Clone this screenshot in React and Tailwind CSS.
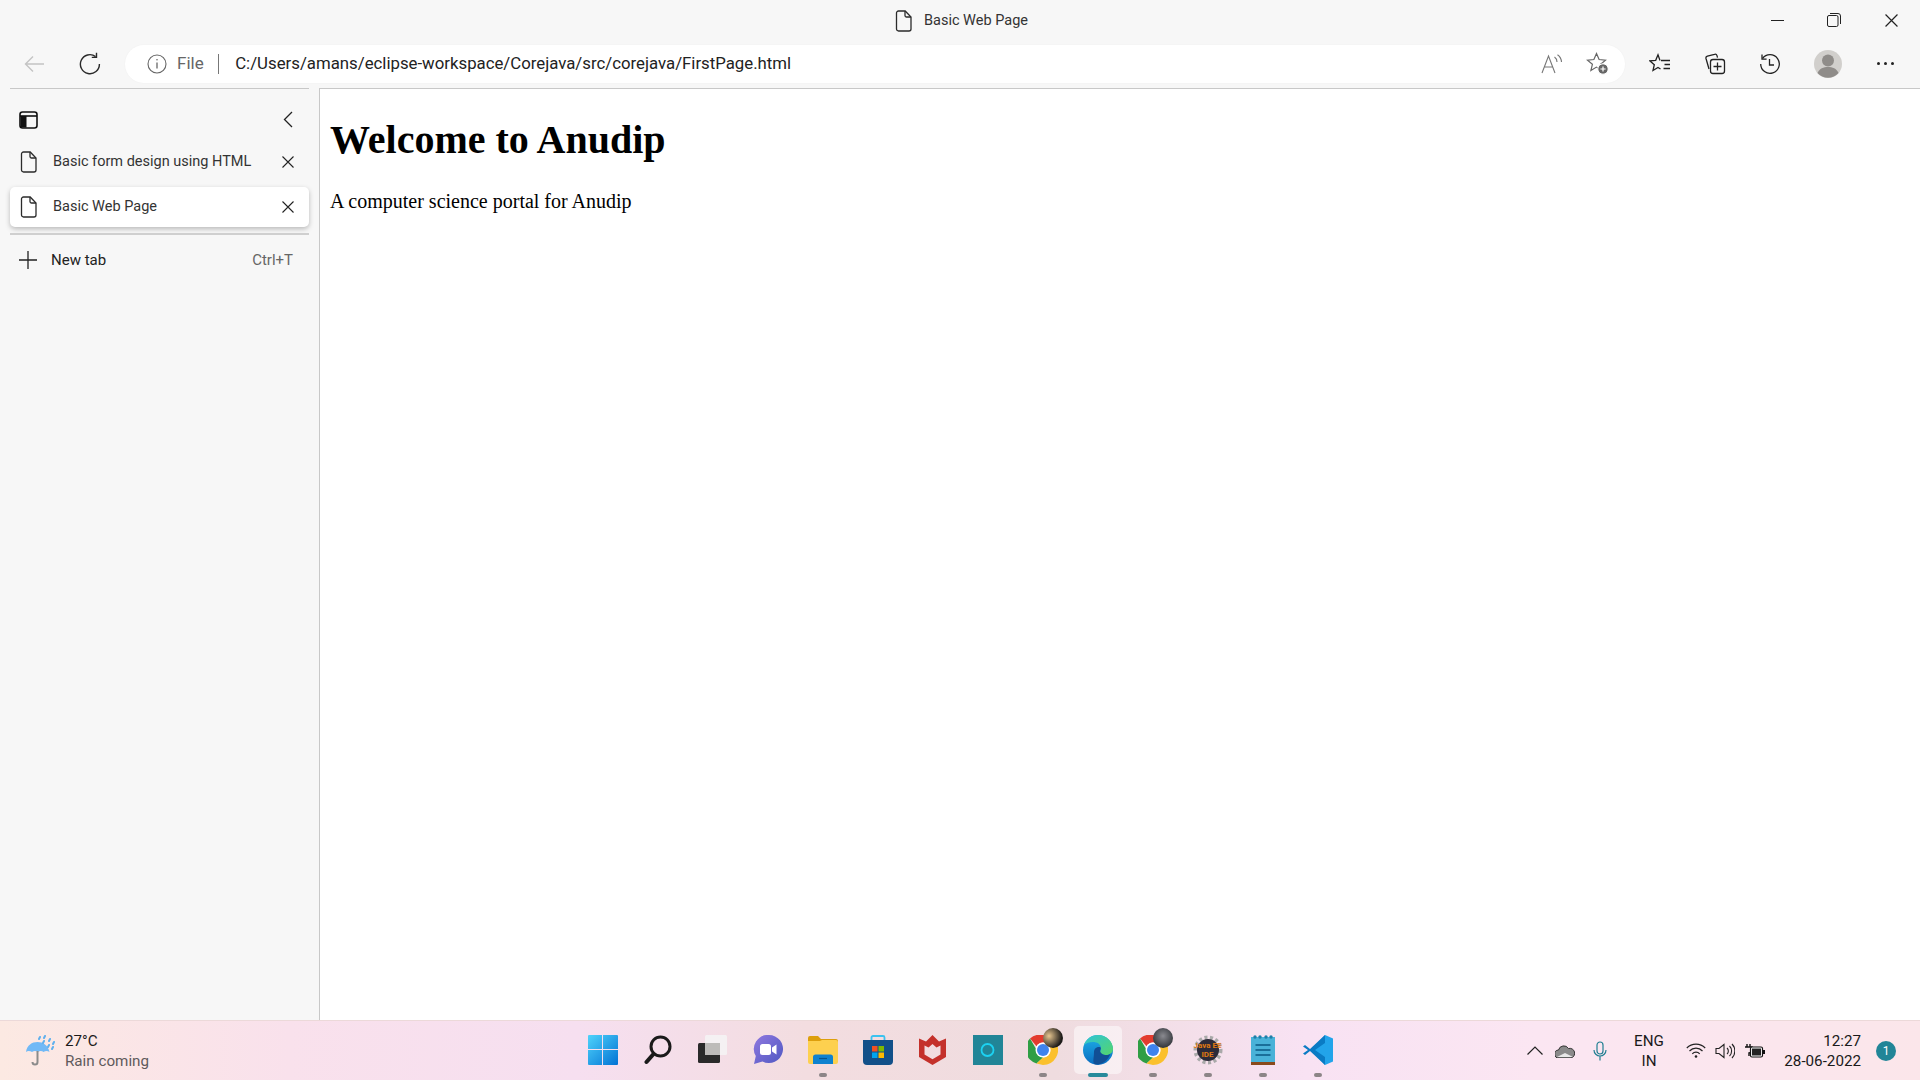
import React from 'react';

const ui = "font-['Roboto','Open_Sans',sans-serif]";

const Doc = ({ className = 'w-[18px] h-[22px]' }) => (
  <svg viewBox="0 0 18 22" className={className} fill="none" stroke="#2b2b2b" strokeWidth="1.3">
    <path d="M3.5 1h6.7L16 7v12a2 2 0 0 1-2 2H3.5a2 2 0 0 1-2-2V3a2 2 0 0 1 2-2z" />
    <path d="M10 1v4.5A1.5 1.5 0 0 0 11.5 7H16" />
  </svg>
);

const Close = ({ size = 12 }) => (
  <svg width={size} height={size} viewBox="0 0 12 12" stroke="#222" strokeWidth="1.1" fill="none">
    <path d="M.5.5l11 11M11.5.5l-11 11" />
  </svg>
);

const TitleBar = () => (
  <div className="h-[42px] grid grid-cols-[1fr_auto_1fr] items-center">
    <div />
    <div className="flex items-center gap-[11px] pl-[3px]">
      <Doc />
      <span className="text-[14.5px] text-[#333]">Basic Web Page</span>
    </div>
    <div className="flex justify-end items-center -mt-[2px]">
      <div className="w-[57px] pl-[2px] flex justify-center">
        <div className="w-[13px] h-px bg-[#222]" />
      </div>
      <div className="w-[58px] flex justify-center">
        <svg width="14" height="14" viewBox="0 0 14 14" fill="none" stroke="#222">
          <rect x="0.5" y="2.5" width="10.5" height="11" rx="1.5" />
          <path d="M3 .5h8a2.5 2.5 0 0 1 2.5 2.5v8" />
        </svg>
      </div>
      <div className="w-[57px] flex justify-center">
        <Close size={13} />
      </div>
    </div>
  </div>
);

const Cell = ({ children, className = '' }) => (
  <div className={`w-[55px] h-full flex items-center justify-center ${className}`}>{children}</div>
);

const Toolbar = () => (
  <div className="h-[46px] flex items-center pb-[3px]">
    <div className="w-[125px] h-full flex items-center pl-[24px] gap-[34px]">
      <svg width="21" height="18" viewBox="0 0 21 18" fill="none" stroke="#c4c4c4" strokeWidth="1.4">
        <path d="M20 9H1.5M9 1.5L1.5 9 9 16.5" />
      </svg>
      <svg width="22" height="24" viewBox="0 0 22 24" fill="none" stroke="#2a2a2a" strokeWidth="1.4">
        <path d="M16.6 4.6A9.5 9.5 0 1 0 20.4 12" />
        <path d="M17.5 .8v4.6h-4.7" />
      </svg>
    </div>
    <div className="w-[1500px] h-[38px] bg-white rounded-full flex items-center pl-[22px] pr-[22px] shadow-[0_0_2px_rgba(0,0,0,0.04)]">
      <svg width="20" height="20" viewBox="0 0 20 20" fill="none" stroke="#666" strokeWidth="1.1">
        <circle cx="10" cy="10" r="9" />
        <path d="M10 8.6v6" strokeWidth="1.3" />
        <circle cx="10" cy="5.8" r="0.8" fill="#666" stroke="none" />
      </svg>
      <span className="ml-[10px] text-[17px] text-[#666]">File</span>
      <div className="ml-[14px] w-[1.5px] h-[20px] bg-[#777]" />
      <span className="ml-[16px] text-[16.8px] text-[#222] flex-1">C:/Users/amans/eclipse-workspace/Corejava/src/corejava/FirstPage.html</span>
      <svg width="22" height="20" viewBox="0 0 22 20" fill="none" stroke="#777" strokeWidth="1.1" className="mr-[23px]">
        <path d="M1 19L7.5 2 14 19M3.4 13h8.200" />
        <path d="M13.5 3a6 6 0 0 1 2.500 5M16.500 .8a9.500 9.500 0 0 1 4 7.200" />
      </svg>
      <svg width="23" height="23" viewBox="0 0 23 23" fill="none" stroke="#666" strokeWidth="1.2" className="mr-[-6px]">
        <path d="M10.5 1.5l2.6 6 6.4.6-4.9 4.2 1.5 6.2-5.6-3.4-5.6 3.4 1.5-6.2L1.5 8.1l6.4-.6z" />
        <circle cx="17" cy="17" r="5.2" fill="#666" stroke="#fff" strokeWidth="1" />
        <path d="M14.4 17h5.2M17 14.4v5.2" stroke="#fff" strokeWidth="1.2" />
      </svg>
    </div>
    <div className="pl-[7.5px] flex h-full items-center">
      <Cell>
        <svg width="22" height="22" viewBox="0 0 22 22" fill="none" stroke="#222" strokeWidth="1.3">
          <path d="M11 7.500L9 1.800 6.700 7.300 1 7.900l4.300 3.800-1.300 5.800 5-3 2.500 1.500" />
          <path d="M12 7.500h9M15.500 11.500h5.500M14.500 15.500h6.500" />
        </svg>
      </Cell>
      <Cell>
        <svg width="22" height="22" viewBox="0 0 22 22" fill="none" stroke="#222" strokeWidth="1.3">
          <path d="M5 16L2 5.500a2 2 0 0 1 1.400-2.400L10.500 1.300A2 2 0 0 1 13 2.600l.5 2" />
          <rect x="6.500" y="6.500" width="14" height="14" rx="2.500" fill="#f7f7f7" />
          <path d="M13.500 9.500v8M9.500 13.500h8" />
        </svg>
      </Cell>
      <Cell>
        <svg width="22" height="22" viewBox="0 0 22 22" fill="none" stroke="#222" strokeWidth="1.3">
          <path d="M3.500 5.500A9.300 9.300 0 1 1 1.700 11" />
          <path d="M3 1.500v4.600h4.600" />
          <path d="M10.500 6v6h4.500" />
        </svg>
      </Cell>
      <Cell className="pl-[6px]">
        <svg width="28" height="28" viewBox="0 0 28 28">
          <circle cx="14" cy="14" r="14" fill="#d1cfcc" />
          <circle cx="14" cy="10.500" r="6" fill="#8f8c89" />
          <path d="M3.500 23c2-4.500 6-6 10.500-6s8.500 1.500 10.500 6a14 14 0 0 1-21 0z" fill="#8f8c89" />
        </svg>
      </Cell>
      <Cell className="pl-[10px]">
        <div className="flex gap-[4px]">
          <div className="w-[3px] h-[3px] rounded-full bg-[#222]" />
          <div className="w-[3px] h-[3px] rounded-full bg-[#222]" />
          <div className="w-[3px] h-[3px] rounded-full bg-[#222]" />
        </div>
      </Cell>
    </div>
  </div>
);

const TabRow = ({ title, active }) => (
  <div className={`h-full flex items-center pl-[10px] pr-[15px] rounded-[5px] ${active ? 'bg-white shadow-[0_2px_5px_rgba(0,0,0,0.25)]' : ''}`}>
    <Doc />
    <span className="ml-[15px] flex-1 text-[14.5px] text-[#333]">{title}</span>
    <Close />
  </div>
);

const Sidebar = () => (
  <aside className="w-[319px] shrink-0 pl-[10px] pr-[10px]">
    <div className="h-[56px] pt-[6px] border-t border-[#c8c8c8] flex items-center justify-between pl-[9px] pr-[16px]">
      <svg width="19" height="18" viewBox="0 0 19 18" fill="none" stroke="#111" strokeWidth="1.6">
        <rect x="1" y="1" width="17" height="16" rx="2.500" />
        <path d="M1 5h17" />
        <rect x="1.500" y="5" width="6" height="11.500" fill="#111" stroke="none" />
      </svg>
      <svg width="10" height="17" viewBox="0 0 10 17" fill="none" stroke="#222" strokeWidth="1.300">
        <path d="M9 1L1.500 8.500 9 16" />
      </svg>
    </div>
    <div className="h-[36px]"><TabRow title="Basic form design using HTML" /></div>
    <div className="h-[40px] mt-[7px]"><TabRow title="Basic Web Page" active /></div>
    <div className="mt-[6px] h-[2px] bg-[#cfcfcf]" />
    <div className="h-[50px] flex items-center pl-[9px] pr-[16px]">
      <svg width="18" height="18" viewBox="0 0 18 18" stroke="#222" strokeWidth="1.300">
        <path d="M9 0v18M0 9h18" />
      </svg>
      <span className="ml-[14px] flex-1 text-[15px] text-[#222]">New tab</span>
      <span className="text-[15px] text-[#666]">Ctrl+T</span>
    </div>
  </aside>
);

const WindowsIcon = () => (
  <svg width="30" height="30" viewBox="0 0 30 30">
    <defs>
      <linearGradient id="win" x1="0" y1="0" x2="1" y2="1">
        <stop offset="0" stopColor="#4fd3fb" />
        <stop offset="1" stopColor="#0272d4" />
      </linearGradient>
    </defs>
    <path fill="url(#win)" d="M1 0h13v14H0V1a1 1 0 0 1 1-1zM15 0h14a1 1 0 0 1 1 1v13H15zM0 15h14v15H1a1 1 0 0 1-1-1zM15 15h15v14a1 1 0 0 1-1 1H15z" />
  </svg>
);

const SearchIcon = () => (
  <svg width="28" height="30" viewBox="0 0 28 30" fill="none" stroke="#1a1a1a">
    <circle cx="16.500" cy="11.500" r="9.500" strokeWidth="3" />
    <path d="M9.500 19L2.500 27" strokeWidth="4" strokeLinecap="round" />
  </svg>
);

const TaskViewIcon = () => (
  <svg width="30" height="30" viewBox="0 0 30 30">
    <rect x="0" y="8" width="22" height="20" rx="1.500" fill="#2a2a2a" />
    <rect x="7" y="0" width="22" height="20" rx="1.500" fill="#f4f4f4" fillOpacity="0.85" />
    <rect x="7" y="8" width="15" height="12" fill="#bdbbb9" />
  </svg>
);

const TeamsIcon = () => (
  <svg width="30" height="30" viewBox="0 0 30 30">
    <defs>
      <linearGradient id="tm" x1="0" y1="0" x2="1" y2="1">
        <stop offset="0" stopColor="#8f78df" />
        <stop offset="1" stopColor="#4f58c2" />
      </linearGradient>
    </defs>
    <path fill="url(#tm)" d="M16 0a14 14 0 1 1-6.500 26.400L1 29l1.800-8A14 14 0 0 1 16 0z" />
    <rect x="7" y="9" width="11" height="11" rx="2.500" fill="#fff" />
    <path d="M19 12.500l4.500-3v10l-4.500-3z" fill="#fff" />
  </svg>
);

const FolderIcon = () => (
  <svg width="30" height="28" viewBox="0 0 30 28">
    <path d="M0 2a2 2 0 0 1 2-2h8l3 3h15a2 2 0 0 1 2 2v3H0z" fill="#dd9f0c" />
    <path d="M0 5h12l2-1h14a2 2 0 0 1 2 2v20a2 2 0 0 1-2 2H2a2 2 0 0 1-2-2z" fill="#fdd04f" />
    <path d="M5 28v-7a2.500 2.500 0 0 1 2.500-2.500h15A2.500 2.500 0 0 1 25 21v7z" fill="#0f82cf" />
    <path d="M11 22.500h8" stroke="#07558f" strokeWidth="1.200" />
  </svg>
);

const StoreIcon = () => (
  <svg width="30" height="30" viewBox="0 0 30 30">
    <path d="M8.500 6V2.500A1.500 1.500 0 0 1 10 1h10a1.500 1.500 0 0 1 1.500 1.500V6" fill="none" stroke="#3bc2ef" strokeWidth="1.800" />
    <path d="M0 5h30v21a4 4 0 0 1-4 4H4a4 4 0 0 1-4-4z" fill="#125089" />
    <rect x="9" y="11" width="5.500" height="5.500" fill="#f25022" />
    <rect x="15.500" y="11" width="5.500" height="5.500" fill="#7fba00" />
    <rect x="9" y="17.500" width="5.500" height="5.500" fill="#00a4ef" />
    <rect x="15.500" y="17.500" width="5.500" height="5.500" fill="#ffb900" />
  </svg>
);

const McAfeeIcon = () => (
  <svg width="27" height="30" viewBox="0 0 27 30">
    <path fill="#c4312b" fillRule="evenodd" d="M0 3.500L7 6.500 13.500 0 20 6.500 27 3.500V22L13.500 30 0 22zM5.500 10.500v9l8 4.800 8-4.800v-9l-4 2-4-3.500-4 3.500z" />
  </svg>
);

const AlexaIcon = () => (
  <div className="w-[30px] h-[30px] bg-[#218597] flex items-center justify-center">
    <svg width="15" height="16" viewBox="0 0 15 16" fill="none">
      <circle cx="7.500" cy="8" r="6" stroke="#1cd2f2" strokeWidth="1.800" />
    </svg>
  </div>
);

const Chrome = ({ badge }) => (
  <div className="relative w-[30px] h-[30px]">
    <svg width="30" height="30" viewBox="0 0 30 30">
      <path d="M15 0a15 15 0 0 1 13 7.500H15a7.500 7.500 0 0 0-6.500 3.750L2 3.500A15 15 0 0 1 15 0z" fill="#e33b2e" />
      <path d="M2 3.500l6.500 11.250L15 22.500 8.500 28.500A15 15 0 0 1 2 3.500z" fill="#2f9e44" />
      <path d="M28 7.500A15 15 0 0 1 15 30l-6.500-1.500L15 22.500a7.500 7.500 0 0 0 6.500-11.250L28 7.500z" fill="#fbc02d" />
      <circle cx="15" cy="15" r="7.500" fill="#fff" />
      <circle cx="15" cy="15" r="6" fill="#3f83ee" />
    </svg>
    <div className={`absolute -top-[7px] left-[15px] w-[20px] h-[20px] rounded-full ${badge}`} />
  </div>
);

const EdgeIcon = () => (
  <svg width="30" height="30" viewBox="0 0 30 30">
    <defs>
      <linearGradient id="eg1" x1="0" y1="0" x2="1" y2="1">
        <stop offset="0" stopColor="#2fc3d9" />
        <stop offset="1" stopColor="#54d66a" />
      </linearGradient>
      <linearGradient id="eg2" x1="0" y1="0" x2="0" y2="1">
        <stop offset="0" stopColor="#1fb0e8" />
        <stop offset="1" stopColor="#0a6cc0" />
      </linearGradient>
    </defs>
    <circle cx="15" cy="15" r="15" fill="url(#eg2)" />
    <path d="M1 10C3 4 8.500 0 15 0c8.500 0 15 6.500 15 14 0 3.500-3 6-7 6-3 0-6-1-6-3 0-1 1-1.500 1-3.500C18 9 14 7 10 7 6 7 3 8 1 10z" fill="url(#eg1)" />
    <path d="M11 17c0-3.500 3-5.500 6-5 1 .5 1 1.500.5 2.500-1 2 .5 5 5 5.500 2 .2 4-.4 5-1.500-2 6.500-8 11-14 11-5 0-2.500-6-2.500-12.500z" fill="#114f95" />
  </svg>
);

const JavaIcon = () => (
  <div className="relative w-[30px] h-[30px] flex items-center justify-center">
    <svg width="30" height="30" viewBox="0 0 30 30" className="absolute inset-0">
      <circle cx="15" cy="15" r="12.500" fill="none" stroke="#a9a9a9" strokeWidth="4" strokeDasharray="3 2.500" />
      <circle cx="15" cy="15" r="11" fill="#2c2a38" />
    </svg>
    <span className="relative whitespace-nowrap text-[8px] leading-[9px] text-center text-[#e07a12] font-bold">Java EE<br />IDE</span>
  </div>
);

const NotepadIcon = () => (
  <svg width="24" height="30" viewBox="0 0 24 30">
    <rect x="0" y="2" width="24" height="25" fill="#49b2d8" />
    <rect x="0" y="27" width="24" height="3" fill="#8a4a1c" />
    <circle cx="4" cy="2" r="1.700" fill="#1f7fa8" />
    <circle cx="9" cy="2" r="1.700" fill="#1f7fa8" />
    <circle cx="15" cy="2" r="1.700" fill="#1f7fa8" />
    <circle cx="20" cy="2" r="1.700" fill="#1f7fa8" />
    <path d="M4.500 10h15M4.500 15h15M4.500 20h15" stroke="#1a6f99" strokeWidth="1.800" />
  </svg>
);

const VsCodeIcon = () => (
  <svg width="30" height="30" viewBox="0 0 30 30">
    <path d="M22 0L30 3.500V26.500L22 30 8 15z" fill="#22a4ea" />
    <path d="M22 0L7 14 2 10 0 11.500 5 15 0 18.500 2 20 7 16l15 14V22L12 15 22 8z" fill="#0a7bc4" />
  </svg>
);

const apps = [
  { id: 'win', icon: <WindowsIcon /> },
  { id: 'search', icon: <SearchIcon /> },
  { id: 'tasks', icon: <TaskViewIcon /> },
  { id: 'teams', icon: <TeamsIcon /> },
  { id: 'files', icon: <FolderIcon />, dot: true },
  { id: 'store', icon: <StoreIcon /> },
  { id: 'mcafee', icon: <McAfeeIcon /> },
  { id: 'alexa', icon: <AlexaIcon /> },
  { id: 'chrome1', icon: <Chrome badge="bg-[radial-gradient(circle_at_30%_40%,#e7c690,#1c1a18_70%)]" />, dot: true },
  { id: 'edge', icon: <EdgeIcon />, active: true },
  { id: 'chrome2', icon: <Chrome badge="bg-[radial-gradient(circle_at_50%_40%,#8a8a90,#33363b_75%)]" />, dot: true },
  { id: 'java', icon: <JavaIcon />, dot: true },
  { id: 'notepad', icon: <NotepadIcon />, dot: true },
  { id: 'code', icon: <VsCodeIcon />, dot: true },
];

const AppButton = ({ icon, dot, active }) => (
  <div className="relative w-[55px] h-[59px] flex items-center justify-center">
    {active && <div className="absolute left-[3.5px] top-[5px] w-[48px] h-[48px] rounded-[5px] bg-white/50" />}
    <div className="relative -mt-[1px]">{icon}</div>
    {dot && <div className="absolute bottom-[3px] left-[24px] w-[8px] h-[4px] rounded-full bg-[#8c8587]" />}
    {active && <div className="absolute bottom-[3px] left-[17.5px] w-[20px] h-[4px] rounded-full bg-[#278a9b]" />}
  </div>
);

const Taskbar = () => (
  <div className="h-[60px] shrink-0 grid grid-cols-[1fr_auto_1fr] items-center border-t border-[#ecd9d9] bg-[linear-gradient(90deg,#fce9e2_0%,#f9e1ec_15%,#f6dff0_30%,#f3dde0_42%,#efdcdf_55%,#f8e2f3_68%,#fbe6f2_80%,#fbe6ea_100%)] text-[#1a1a1a]">
    <div className="flex items-center pl-[25px]">
      <svg width="32" height="32" viewBox="0 0 32 32">
        <path d="M1 17C2 10 7 7 12.500 7S23 10 24.500 17c-2-1.500-4-1.500-6 0-1.500-1.500-4-1.500-5.500 0-2-1.500-4-1.500-6 0-2-1.500-4.500-1.500-6 0z" fill="#71b9f6" />
        <path d="M12.500 16v11a2.500 2.500 0 0 1-5 0" fill="none" stroke="#8b8b8b" strokeWidth="2" />
        <path d="M14 4l1-2M19 3l1-2M18 8l1-2M24 6l1-2M23 12l1-2M28 9l1-2M27 14l1-2" stroke="#5fb0ee" strokeWidth="2" strokeLinecap="round" />
      </svg>
      <div className="ml-[8px] text-[15.2px] leading-[20px]">
        <div>27°C</div>
        <div className="text-[#5f5a5c]">Rain coming</div>
      </div>
    </div>
    <div className="flex">
      {apps.map((a) => (
        <AppButton key={a.id} icon={a.icon} dot={a.dot} active={a.active} />
      ))}
    </div>
    <div className="flex items-center justify-end pr-[24px]">
      <svg width="16" height="9" viewBox="0 0 16 9" fill="none" stroke="#222" strokeWidth="1.200">
        <path d="M.5 8.500L8 1l7.500 7.500" />
      </svg>
      <svg width="20" height="14" viewBox="0 0 20 14" className="ml-[12px]">
        <path d="M4 14a4 4 0 0 1-.5-8A5.500 5.500 0 0 1 13.500 4.500 4.500 4.500 0 0 1 16 14z" fill="#8a8a8a" stroke="#333" strokeWidth="1" />
        <path d="M2 13l8-4 8 4z" fill="#e8e8e8" />
      </svg>
      <svg width="14" height="20" viewBox="0 0 14 20" fill="none" stroke="#217f92" strokeWidth="1.200" className="ml-[18px]">
        <rect x="4" y="1" width="6" height="12" rx="3" />
        <path d="M1 9a6 6 0 0 0 12 0M7 15v4.500" />
      </svg>
      <div className="ml-[22px] w-[40px] text-center text-[15.2px] leading-[20px]">ENG<br />IN</div>
      <svg width="20" height="15" viewBox="0 0 20 15" fill="none" stroke="#222" strokeWidth="1.200" className="ml-[17px]">
        <path d="M.8 5a13 13 0 0 1 18.400 0M3.500 8a9 9 0 0 1 13 0M6.300 10.800a5 5 0 0 1 7.400 0" />
        <circle cx="10" cy="13.500" r="1.300" fill="#222" stroke="none" />
      </svg>
      <svg width="20" height="16" viewBox="0 0 20 16" fill="none" stroke="#222" strokeWidth="1.100" className="ml-[9px]">
        <path d="M1 5.500h3L9 1.500v13L4 10.500H1z" />
        <path d="M12 5a4 4 0 0 1 0 6M14.500 3a7 7 0 0 1 0 10M17 1a10 10 0 0 1 0 14" />
      </svg>
      <svg width="20" height="14" viewBox="0 0 20 14" className="ml-[10px]">
        <path d="M2 0v3M5 0v3M0 3h7v3a3 3 0 0 1-3 3v3" fill="none" stroke="#111" strokeWidth="1.400" />
        <rect x="5.500" y="3" width="12" height="10" rx="1.500" fill="#fff" stroke="#111" strokeWidth="1.200" />
        <rect x="7" y="4.500" width="9" height="7" fill="#222" />
        <rect x="18" y="6" width="2" height="4" fill="#111" />
      </svg>
      <div className="w-[96px] text-right text-[15.2px] leading-[20px]">
        <div>12:27</div>
        <div>28-06-2022</div>
      </div>
      <div className="ml-[15px] w-[20px] h-[20px] rounded-full bg-[#218597] text-white text-[12px] flex items-center justify-center">1</div>
    </div>
  </div>
);

export default function App() {
  return (
    <div className={`w-[1920px] h-[1080px] flex flex-col overflow-hidden bg-[#f7f7f7] ${ui}`}>
      <TitleBar />
      <Toolbar />
      <div className="flex-1 flex min-h-0">
        <Sidebar />
        <main className="flex-1 bg-white border-l border-t border-[#c8c8c8] pl-[10px] pt-[28px] text-black font-['Liberation_Serif',serif]">
          <h1 className="text-[40px] leading-[46px] font-bold">Welcome to Anudip</h1>
          <p className="mt-[27px] text-[20px] leading-[23px]">A computer science portal for Anudip</p>
        </main>
      </div>
      <Taskbar />
    </div>
  );
}
